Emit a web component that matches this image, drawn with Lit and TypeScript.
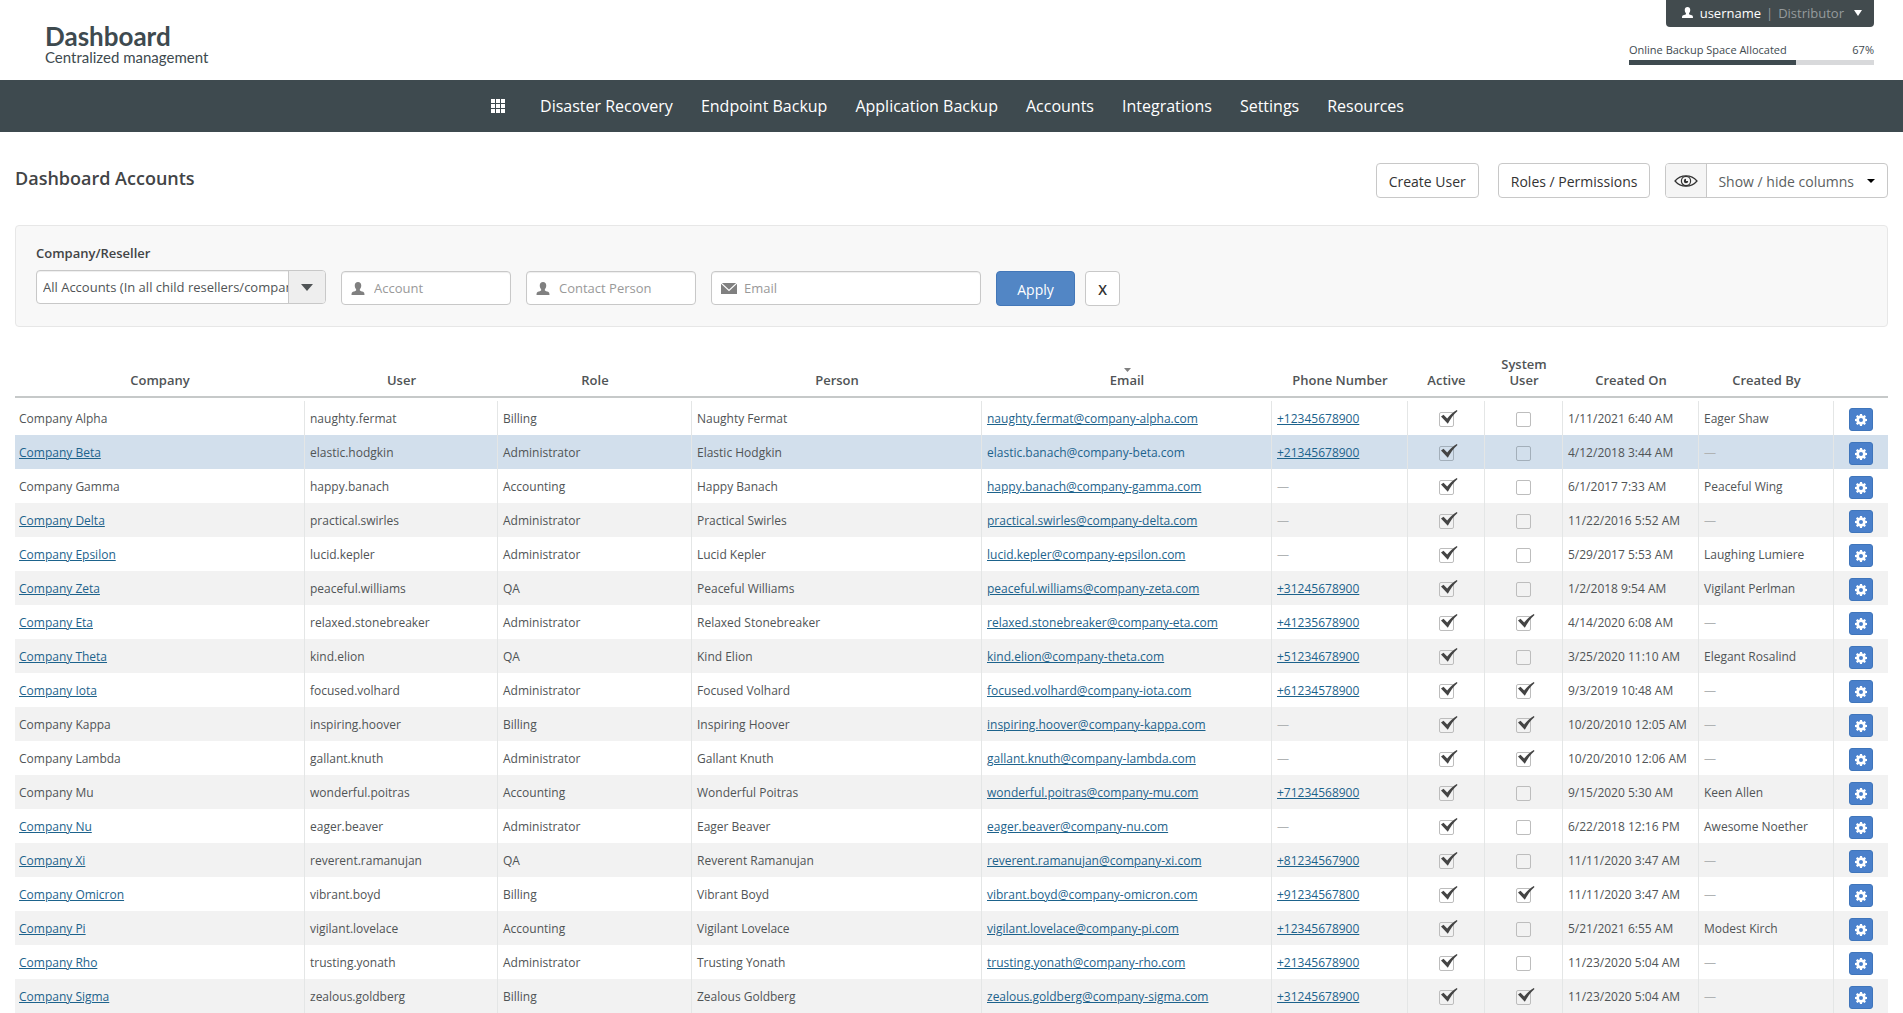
import { LitElement, html, css, svg, nothing } from "lit";
import { customElement, state } from "lit/decorators.js";
import { classMap } from "lit/directives/class-map.js";

interface Account {
  company: string;
  companyLink: boolean;
  user: string;
  role: string;
  person: string;
  email: string;
  phone: string;
  active: boolean;
  system: boolean;
  createdOn: string;
  createdBy: string;
}

const row = (
  company: string, companyLink: boolean, user: string, role: string, person: string,
  email: string, phone: string, system: boolean, createdOn: string, createdBy: string,
): Account => ({ company, companyLink, user, role, person, email, phone, active: true, system, createdOn, createdBy });

const ACCOUNTS: Account[] = [
  row("Company Alpha", false, "naughty.fermat", "Billing", "Naughty Fermat", "naughty.fermat@company-alpha.com", "+12345678900", false, "1/11/2021 6:40 AM", "Eager Shaw"),
  row("Company Beta", true, "elastic.hodgkin", "Administrator", "Elastic Hodgkin", "elastic.banach@company-beta.com", "+21345678900", false, "4/12/2018 3:44 AM", ""),
  row("Company Gamma", false, "happy.banach", "Accounting", "Happy Banach", "happy.banach@company-gamma.com", "", false, "6/1/2017 7:33 AM", "Peaceful Wing"),
  row("Company Delta", true, "practical.swirles", "Administrator", "Practical Swirles", "practical.swirles@company-delta.com", "", false, "11/22/2016 5:52 AM", ""),
  row("Company Epsilon", true, "lucid.kepler", "Administrator", "Lucid Kepler", "lucid.kepler@company-epsilon.com", "", false, "5/29/2017 5:53 AM", "Laughing Lumiere"),
  row("Company Zeta", true, "peaceful.williams", "QA", "Peaceful Williams", "peaceful.williams@company-zeta.com", "+31245678900", false, "1/2/2018 9:54 AM", "Vigilant Perlman"),
  row("Company Eta", true, "relaxed.stonebreaker", "Administrator", "Relaxed Stonebreaker", "relaxed.stonebreaker@company-eta.com", "+41235678900", true, "4/14/2020 6:08 AM", ""),
  row("Company Theta", true, "kind.elion", "QA", "Kind Elion", "kind.elion@company-theta.com", "+51234678900", false, "3/25/2020 11:10 AM", "Elegant Rosalind"),
  row("Company Iota", true, "focused.volhard", "Administrator", "Focused Volhard", "focused.volhard@company-iota.com", "+61234578900", true, "9/3/2019 10:48 AM", ""),
  row("Company Kappa", false, "inspiring.hoover", "Billing", "Inspiring Hoover", "inspiring.hoover@company-kappa.com", "", true, "10/20/2010 12:05 AM", ""),
  row("Company Lambda", false, "gallant.knuth", "Administrator", "Gallant Knuth", "gallant.knuth@company-lambda.com", "", true, "10/20/2010 12:06 AM", ""),
  row("Company Mu", false, "wonderful.poitras", "Accounting", "Wonderful Poitras", "wonderful.poitras@company-mu.com", "+71234568900", false, "9/15/2020 5:30 AM", "Keen Allen"),
  row("Company Nu", true, "eager.beaver", "Administrator", "Eager Beaver", "eager.beaver@company-nu.com", "", false, "6/22/2018 12:16 PM", "Awesome Noether"),
  row("Company Xi", true, "reverent.ramanujan", "QA", "Reverent Ramanujan", "reverent.ramanujan@company-xi.com", "+81234567900", false, "11/11/2020 3:47 AM", ""),
  row("Company Omicron", true, "vibrant.boyd", "Billing", "Vibrant Boyd", "vibrant.boyd@company-omicron.com", "+91234567800", true, "11/11/2020 3:47 AM", ""),
  row("Company Pi", true, "vigilant.lovelace", "Accounting", "Vigilant Lovelace", "vigilant.lovelace@company-pi.com", "+12345678900", false, "5/21/2021 6:55 AM", "Modest Kirch"),
  row("Company Rho", true, "trusting.yonath", "Administrator", "Trusting Yonath", "trusting.yonath@company-rho.com", "+21345678900", false, "11/23/2020 5:04 AM", ""),
  row("Company Sigma", true, "zealous.goldberg", "Billing", "Zealous Goldberg", "zealous.goldberg@company-sigma.com", "+31245678900", true, "11/23/2020 5:04 AM", ""),
];

const NAV = ["Disaster Recovery", "Endpoint Backup", "Application Backup", "Accounts", "Integrations", "Settings", "Resources"];

const COLUMNS: [string, string][] = [
  ["company", "Company"], ["user", "User"], ["role", "Role"], ["person", "Person"], ["email", "Email"],
  ["phone", "Phone Number"], ["active", "Active"], ["system", "System User"], ["created-on", "Created On"],
  ["created-by", "Created By"], ["actions", ""],
];

const personIcon = html`<svg class="icon person" viewBox="0 0 14 14" aria-hidden="true">
  <path d="M7 0c2.200 0 3.500 1.500 3.500 3.800 0 1.900-.7 3.200-1.500 4v1.300c.5.500 2 .9 3.500 1.500 1 .4 1.500 1.300 1.500 3.400H0c0-2.100.5-3 1.500-3.400C3 10 4.500 9.600 5 9.100V7.800c-.8-.8-1.500-2.100-1.500-4C3.500 1.500 4.800 0 7 0z"/>
</svg>`;
const caret = () => html`<svg class="icon arrow" viewBox="0 0 10 6" preserveAspectRatio="none" aria-hidden="true"><path d="M0 0h10L5 6z"/></svg>`;

const gearIcon = html`<svg class="gear" viewBox="0 0 12 12" aria-hidden="true">
  <path fill-rule="evenodd" d="M5 0h2l.3 1.600 1 .4L9.600 1.100l1.400 1.400-1 1.300.4 1L12 5v2l-1.600.3-.4 1 .9 1.300-1.400 1.400-1.300-.9-1 .4L7 12H5l-.3-1.500-1-.4-1.300.9L1 9.600l.9-1.300-.4-1L0 7V5l1.500-.3.4-1L1 2.400 2.400 1l1.300.9 1-.4zM6 4a2 2 0 1 0 0 4 2 2 0 0 0 0-4z"/>
</svg>`;

@customElement("app-root")
export class AppRoot extends LitElement {
  @state() private accounts = ACCOUNTS;
  @state() private selected = 1;
  private allocated = 67;
  private barFill = 68;

  static styles = css`
    :host {
      display: block;
      background: #fff;
      color: #505456;
      font: 12px/16px "Open Sans", "Noto Sans", sans-serif;
    }
    * { box-sizing: border-box; }
    button, input, select { font: inherit; color: inherit; margin: 0; }
    button { cursor: pointer; }
    .icon { display: block; flex: none; fill: currentColor; }

    .top {
      display: flex;
      justify-content: space-between;
      height: 80px;
      padding: 0 29px 0 45px;
    }
    .brand { padding-top: 22px; color: #3e4a4f; font-family: Lato, sans-serif; }
    .brand-name { font-size: 26px; line-height: 28px; font-weight: 700; }
    .brand-sub { font-size: 15px; line-height: 14px; }
    .session { display: flex; flex-direction: column; align-items: flex-end; }
    .user-menu {
      display: flex;
      align-items: center;
      gap: 5px;
      height: 27px;
      padding: 0 12px 2px 16px;
      border: 0;
      border-radius: 0 0 4px 4px;
      background: #424b4e;
      color: #fff;
      font-size: 13px;
    }
    .user-menu .person { width: 11px; height: 11px; margin-right: 2px; }
    .user-menu .muted { color: #969b9d; }
    .user-menu .arrow { width: 8px; height: 6px; margin-left: 5px; }
    .quota { width: 245px; margin-top: 16px; color: #3e4a4f; font-size: 11px; line-height: 14px; }
    .quota-text { display: flex; justify-content: space-between; margin-bottom: 3px; }
    .track { height: 5px; background: #d8d9db; }
    .fill { height: 100%; background: #3e4a4f; }

    .nav {
      display: flex;
      justify-content: center;
      align-items: center;
      gap: 28px;
      height: 52px;
      padding-right: 8px;
      background: #3e4a4f;
      font-size: 16px;
      line-height: 24px;
    }
    .nav a { color: #fff; text-decoration: none; }
    .nav .apps { margin-right: 7px; }
    .apps svg { display: block; width: 14px; height: 14px; fill: #fff; }

    .content { padding: 0 15px; }
    .heading {
      display: flex;
      align-items: flex-start;
      padding: 31px 0 27px;
    }
    h1 { margin: 0 auto 0 0; padding-top: 3px; font-size: 18px; line-height: 24px; font-weight: 600; color: #424446; }
    .btn {
      height: 35px;
      padding: 2px 12px 0;
      border: 1px solid #c8c8c8;
      border-radius: 4px;
      background: #fff;
      color: #333;
      font-size: 14px;
    }
    .heading .btn { margin-right: 19px; }
    .heading .roles { margin-right: 15px; }
    .columns { display: flex; padding: 0; overflow: hidden; align-items: stretch; color: #5c5f61; }
    .heading .columns { margin-right: 0; }
    .eye { display: grid; place-items: center; width: 41px; border-right: 1px solid #c8c8c8; background: #f5f5f5; }
    .eye svg { display: block; width: 24px; height: 14px; }
    .columns-text { display: flex; align-items: center; padding: 2px 12px 0 11px; gap: 13px; }
    .columns .arrow { width: 8px; height: 4px; margin-bottom: 2px; color: #000; }

    .filters {
      display: flex;
      align-items: flex-start;
      gap: 15px;
      padding: 18px 20px 20px;
      border: 1px solid #e7e7e7;
      border-radius: 4px;
      background: #f8f8f8;
      font-size: 13px;
    }
    .field-label { display: block; height: 26px; line-height: 18px; font-weight: 600; color: #424446; }
    .picker {
      display: grid;
      grid-template-columns: 1fr 37px;
      width: 290px;
      height: 34px;
      border: 1px solid #c8c8c8;
      border-radius: 4px;
      background: #fff;
      box-shadow: inset 0 1px 1px rgba(0, 0, 0, 0.07);
      overflow: hidden;
    }
    .picker select {
      min-width: 0;
      border: 0;
      padding: 0 0 0 6px;
      background: none;
      appearance: none;
      text-overflow: clip;
    }
    .picker-arrow { display: grid; place-items: center; border-left: 1px solid #c8c8c8; background: #eee; }
    .picker-arrow .arrow { width: 12px; height: 7px; }
    .text {
      display: flex;
      align-items: center;
      gap: 9px;
      width: 170px;
      height: 34px;
      margin-top: 27px;
      padding: 0 9px;
      border: 1px solid #c8c8c8;
      border-radius: 4px;
      background: #fff;
      box-shadow: inset 0 1px 1px rgba(0, 0, 0, 0.07);
      color: #808080;
    }
    .text .person { width: 14px; height: 13px; }
    .text.wide { width: 270px; gap: 7px; }
    .text .mail { width: 16px; height: 11px; }
    .text input { flex: 1; min-width: 0; border: 0; padding: 0; background: none; outline: 0; }
    .text input::placeholder { color: #999; opacity: 1; }
    .submit { display: flex; gap: 10px; margin-top: 27px; }
    .apply { width: 79px; border-color: #4377b8; background: #5286c5; color: #fff; }
    .clear { width: 35px; padding: 2px 0 0; font-weight: 600; }

    table { width: 100%; margin-top: 22px; border-collapse: separate; border-spacing: 0; table-layout: fixed; }
    .col-company { width: 290px; }
    .col-user { width: 193px; }
    .col-role { width: 194px; }
    .col-person { width: 290px; }
    .col-email { width: 290px; }
    .col-phone { width: 136px; }
    .col-active { width: 77px; }
    .col-system { width: 78px; }
    .col-created-on { width: 136px; }
    .col-created-by { width: 135px; }
    .col-actions { width: 54px; }
    th {
      height: 49px;
      padding: 0 12px 8px;
      vertical-align: bottom;
      border-bottom: 2px solid #c6c9c9;
      font-size: 13px;
      line-height: 16px;
      font-weight: 600;
      text-align: center;
    }
    th .arrow { width: 7px; height: 4px; margin: 0 auto; color: #808080; }
    tbody td {
      height: 34px;
      padding: 2px 4px 0;
      border-right: 1px solid #e4e6e6;
      white-space: nowrap;
    }
    tbody td:nth-child(n + 2) { padding-left: 5px; }
    tbody td:last-child { border-right: 0; }
    tbody .gap td { height: 3px; padding: 0; }
    tr.alt td { background: #f2f2f2; }
    tr.selected td { background: #d2dfec; }
    td a { color: #1d638c; text-decoration: underline; }
    tr.selected .mailto { text-decoration: none; }
    .none { color: #b0b3b4; }
    tbody td.mid, tbody td.mid:nth-child(n + 2) { padding: 0; }
    .check { display: grid; justify-content: center; height: 34px; }
    .check input {
      grid-area: 1 / 1;
      align-self: start;
      appearance: none;
      width: 15px;
      height: 15px;
      margin-top: 11px;
      border: 1px solid #bdbdbd;
      border-radius: 2px;
      background: transparent;
    }
    tr.selected .check input { border-color: #a3afba; }
    .check svg { grid-area: 1 / 1; display: block; width: 17px; height: 15px; margin: 9px -4px 0 2px; pointer-events: none; fill: #444; }
    .tool {
      display: grid;
      place-items: center;
      width: 24px;
      height: 23px;
      margin: 3px auto 0;
      padding: 0;
      border: 1px solid #3f75bb;
      border-radius: 3px;
      background: #4a80cb;
    }
    .gear { display: block; width: 12px; height: 12px; fill: #fff; }
  `;

  private renderCheck(checked: boolean, label: string, index: number, key: "active" | "system") {
    return html`<td class="mid"><label class="check">
      <input type="checkbox" aria-label=${label} .checked=${checked}
        @change=${(e: Event) => this.toggle(index, key, (e.target as HTMLInputElement).checked)}>
      ${checked ? html`<svg viewBox="0 0 17 15" aria-hidden="true"><path d="M0 6.500l2.500-1.700 3.700 3.700C9 5 12 2 15.800 0l.7.9C12.500 4.500 9.500 8.500 6.800 13.800z"/></svg>` : nothing}
    </label></td>`;
  }

  private toggle(index: number, key: "active" | "system", value: boolean) {
    this.accounts = this.accounts.map((a, i) => (i === index ? { ...a, [key]: value } : a));
  }

  private renderRow(a: Account, i: number) {
    const none = html`<span class="none">—</span>`;
    return html`<tr class=${classMap({ alt: i % 2 === 1, selected: i === this.selected })}>
      <td>${a.companyLink ? html`<a href="#">${a.company}</a>` : a.company}</td>
      <td>${a.user}</td>
      <td>${a.role}</td>
      <td>${a.person}</td>
      <td><a class="mailto" href="mailto:${a.email}">${a.email}</a></td>
      <td>${a.phone ? html`<a href="tel:${a.phone}">${a.phone}</a>` : none}</td>
      ${this.renderCheck(a.active, "Active", i, "active")}
      ${this.renderCheck(a.system, "System User", i, "system")}
      <td>${a.createdOn}</td>
      <td>${a.createdBy || none}</td>
      <td class="mid"><button class="tool" aria-label="Account actions">${gearIcon}</button></td>
    </tr>`;
  }

  render() {
    return html`
      <header class="top">
        <div class="brand">
          <div class="brand-name">Dashboard</div>
          <div class="brand-sub">Centralized management</div>
        </div>
        <div class="session">
          <button class="user-menu">${personIcon}<span>username</span><span class="muted">|</span><span class="muted">Distributor</span>${caret()}</button>
          <div class="quota">
            <div class="quota-text"><span>Online Backup Space Allocated</span><span>${this.allocated}%</span></div>
            <div class="track"><div class="fill" style="width:${this.barFill}%"></div></div>
          </div>
        </div>
      </header>
      <nav class="nav">
        <a class="apps" href="#" aria-label="Apps"><svg viewBox="0 0 14 14">
          ${[0, 5, 10].map((y) => [0, 5, 10].map((x) => svg`<rect x=${x} y=${y} width="4" height="4"/>`))}
        </svg></a>
        ${NAV.map((n) => html`<a href="#">${n}</a>`)}
      </nav>
      <main class="content">
        <div class="heading">
          <h1>Dashboard Accounts</h1>
          <button class="btn">Create User</button>
          <button class="btn roles">Roles / Permissions</button>
          <button class="btn columns">
            <span class="eye"><svg viewBox="0 0 24 14" fill="none" stroke="#333" aria-hidden="true">
              <path stroke-width="1.200" d="M1 7c3-3.600 7-5.200 11-5.200S20 3.400 23 7c-3 3.600-7 5.200-11 5.200S4 10.600 1 7z"/>
              <circle cx="12" cy="7" r="4.600" stroke-width="1.200"/>
              <path d="M12 4.800A2.200 2.200 0 1 0 14.200 7H12z" fill="#333" stroke="none"/>
            </svg></span>
            <span class="columns-text">Show / hide columns ${caret()}</span>
          </button>
        </div>
        <form class="filters" @submit=${(e: Event) => e.preventDefault()}>
          <div>
            <label class="field-label" for="company">Company/Reseller</label>
            <div class="picker">
              <select id="company"><option>All Accounts (In all child resellers/companies)</option></select>
              <span class="picker-arrow">${caret()}</span>
            </div>
          </div>
          <label class="text">${personIcon}<input type="text" placeholder="Account" aria-label="Account"></label>
          <label class="text">${personIcon}<input type="text" placeholder="Contact Person" aria-label="Contact Person"></label>
          <label class="text wide"><svg class="icon mail" viewBox="0 0 16 11" aria-hidden="true"><path d="M0 0h16v11H0z"/><path d="M0 0l8 7.500L16 0" fill="none" stroke="#fff" stroke-width="1.200"/></svg><input type="email" placeholder="Email" aria-label="Email"></label>
          <div class="submit">
            <button class="btn apply" type="submit">Apply</button>
            <button class="btn clear" type="reset">X</button>
          </div>
        </form>
        <table>
          <colgroup>${COLUMNS.map(([k]) => html`<col class="col-${k}">`)}</colgroup>
          <thead>
            <tr>${COLUMNS.map(([k, t]) => html`<th>${k === "email" ? caret() : nothing}${t}</th>`)}</tr>
          </thead>
          <tbody>
            <tr class="gap"><td colspan="11"></td></tr>
            ${this.accounts.map((a, i) => this.renderRow(a, i))}
          </tbody>
        </table>
      </main>
    `;
  }
}
